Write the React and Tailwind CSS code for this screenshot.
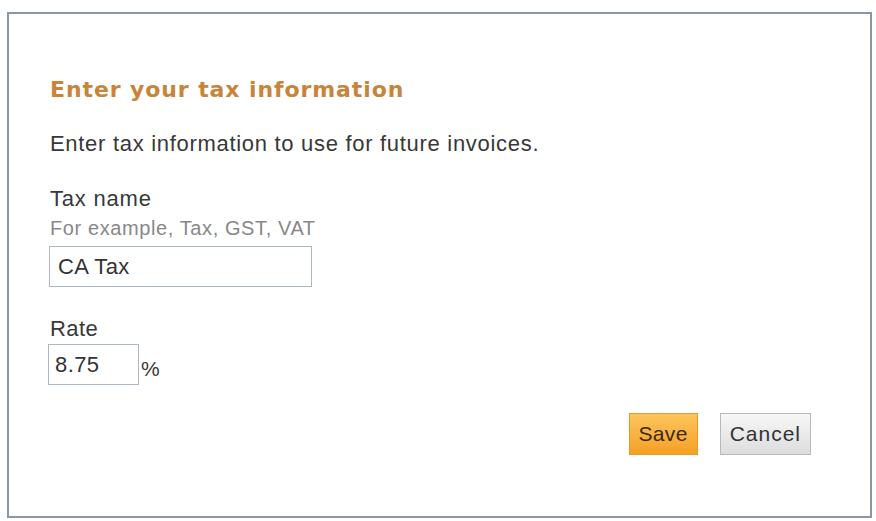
import { useState } from 'react';

const App = () => {
  const [taxName, setTaxName] = useState('CA Tax');
  const [rate, setRate] = useState('8.75');

  return (
    <div className="w-[876px] h-[521px] bg-white pt-[12px] pl-[7px] font-['Liberation_Sans',Arial,sans-serif]">
      <div className="w-[865px] h-[506px] border-2 border-[#8a96a4] bg-white pl-[41px] pr-[59px] flex flex-col">
        <h1 className="mt-[63px] text-[22px] leading-[26px] font-bold tracking-[0.9px] text-[#c8853a] font-['DejaVu_Sans',Verdana,sans-serif]">
          Enter your tax information
        </h1>

        <p className="mt-[28px] text-[22px] leading-[26px] tracking-[0.7px] text-[#383838]">
          Enter tax information to use for future invoices.
        </p>

        <label className="mt-[29px] text-[22px] leading-[26px] tracking-[0.8px] text-[#383838]">Tax name</label>
        <span className="mt-[5px] text-[20px] leading-[22px] tracking-[0.6px] text-[#888]">
          For example, Tax, GST, VAT
        </span>
        <input
          type="text"
          value={taxName}
          onChange={(e) => setTaxName(e.target.value)}
          className="mt-[7px] -ml-[1px] w-[263px] h-[41px] border border-[#a9b7c6] px-[8px] text-[22px] tracking-[0.4px] text-[#333] outline-none"
        />

        <label className="mt-[29px] text-[22px] leading-[26px] tracking-[0.4px] text-[#383838]">Rate</label>
        <div className="mt-[2px] -ml-[2px] flex items-end">
          <input
            type="text"
            value={rate}
            onChange={(e) => setRate(e.target.value)}
            className="w-[91px] h-[41px] border border-[#a9b7c6] px-[6px] text-[22px] tracking-[0.4px] text-[#333] outline-none"
          />
          <span className="ml-[2px] mb-[5px] text-[21px] leading-[22px] text-[#383838]">%</span>
        </div>

        <div className="mt-[28px] flex justify-end gap-[22px]">
          <button
            type="button"
            className="h-[42px] px-[9px] border border-[#e39a27] bg-gradient-to-b from-[#fcc55c] to-[#f5a020] text-[21px] tracking-[0.3px] text-[#3b2a12]"
          >
            Save
          </button>
          <button
            type="button"
            className="h-[42px] px-[9px] border border-[#b9b9b9] bg-gradient-to-b from-[#f7f7f7] to-[#dddddd] text-[21px] tracking-[1px] text-[#333]"
          >
            Cancel
          </button>
        </div>
      </div>
    </div>
  );
};

export default App;
